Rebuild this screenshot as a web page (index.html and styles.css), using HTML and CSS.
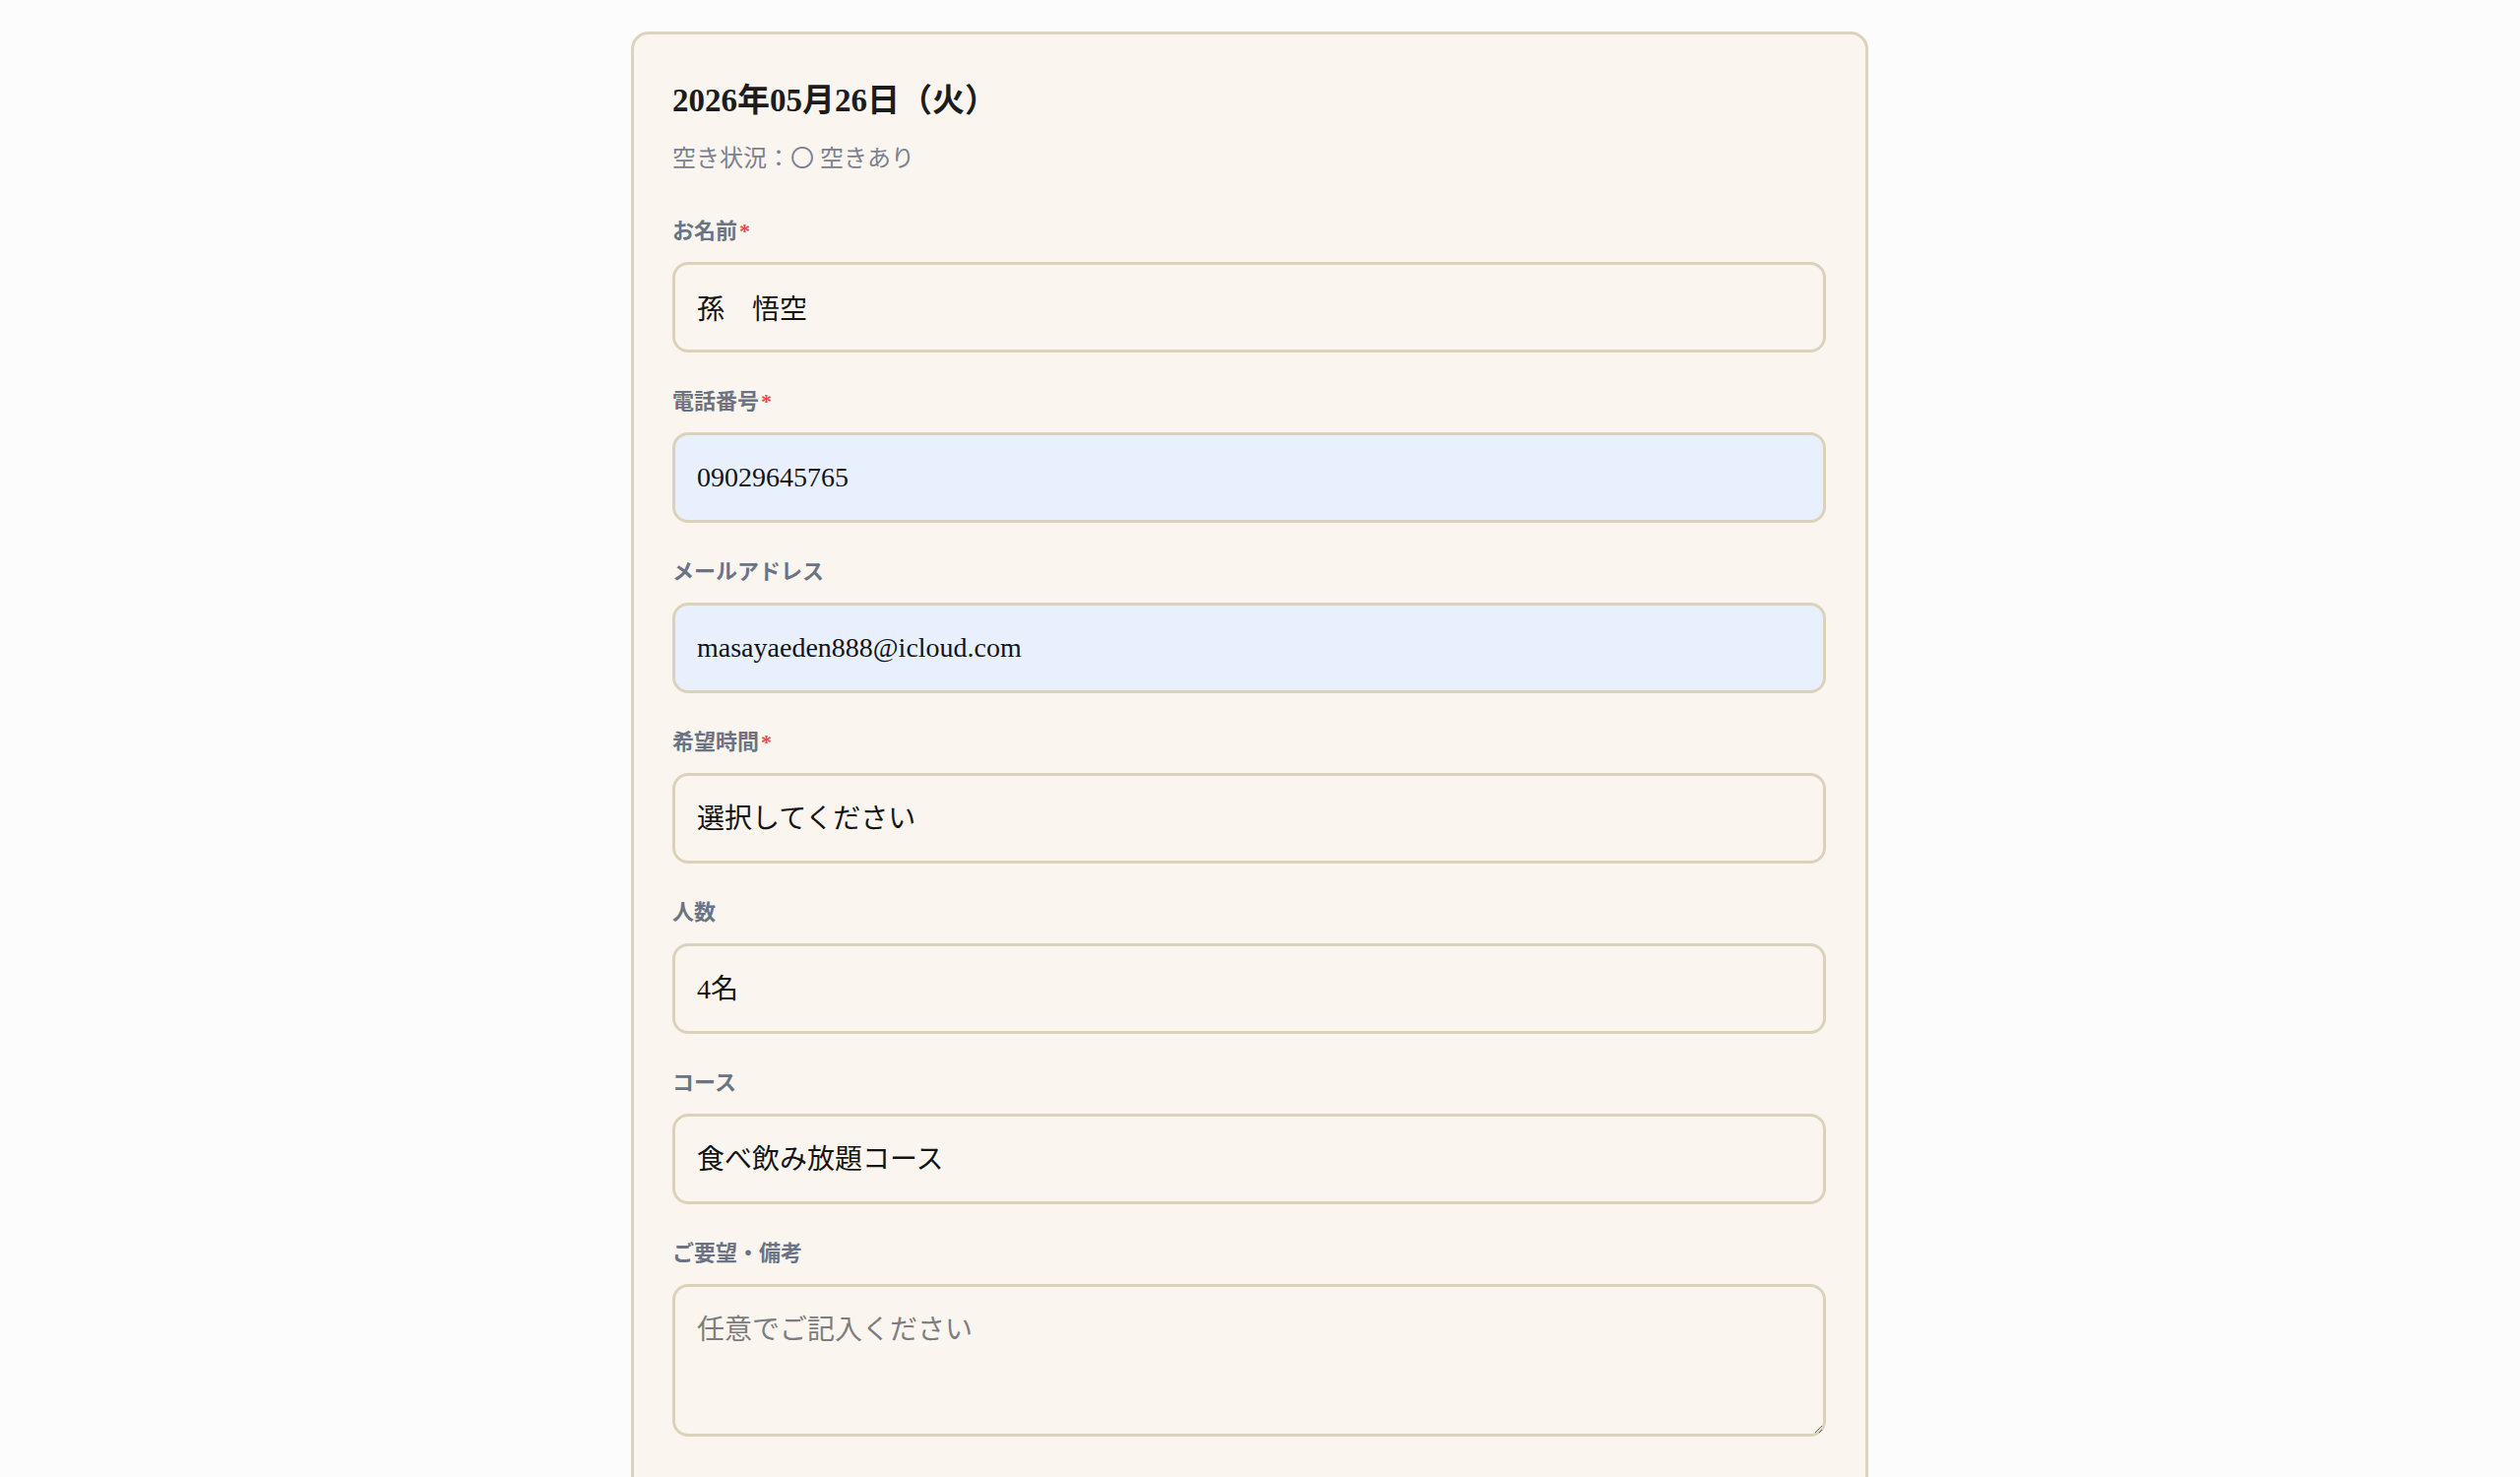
FILE: index.html
```html
<!DOCTYPE html>
<html lang="ja">
<head>
    <meta charset="UTF-8">
    <meta name="viewport" content="width=device-width, initial-scale=1.0">
    <title>ご予約フォーム</title>
    <link rel="stylesheet" href="styles.css">
</head>
<body>
    <div class="reserve-card">
        <!-- Header -->
        <h2 class="reserve-date">2026年05月26日（火）</h2>
        <p class="reserve-status">空き状況：〇 空きあり</p>

        <!-- Fields -->
        <div class="form-group">
            <label class="form-label" for="name">お名前<span class="required">*</span></label>
            <input class="form-input" id="name" type="text" value="孫　悟空">
        </div>

        <div class="form-group">
            <label class="form-label" for="tel">電話番号<span class="required">*</span></label>
            <input class="form-input autofilled" id="tel" type="tel" value="09029645765">
        </div>

        <div class="form-group">
            <label class="form-label" for="email">メールアドレス</label>
            <input class="form-input autofilled" id="email" type="email" value="masayaeden888@icloud.com">
        </div>

        <div class="form-group">
            <label class="form-label" for="time">希望時間<span class="required">*</span></label>
            <select class="form-input" id="time">
                <option>選択してください</option>
            </select>
        </div>

        <div class="form-group">
            <label class="form-label" for="people">人数</label>
            <select class="form-input" id="people">
                <option>4名</option>
            </select>
        </div>

        <div class="form-group">
            <label class="form-label" for="course">コース</label>
            <select class="form-input" id="course">
                <option>食べ飲み放題コース</option>
            </select>
        </div>

        <div class="form-group">
            <label class="form-label" for="note">ご要望・備考</label>
            <textarea class="form-input form-textarea" id="note" placeholder="任意でご記入ください"></textarea>
        </div>
    </div>
</body>
</html>
```

FILE: styles.css
```css
body {
    margin: 0;
    padding: 32px 21px 0 0;
    background-color: #fcfcfc;
    font-family: "Liberation Serif", "Noto Sans CJK JP", serif;
}

.reserve-card {
    width: 1257px;
    box-sizing: border-box;
    margin: 0 auto;
    padding: 47px 40px 40px 39px;
    background: #faf6ef;
    border: 3px solid #dcd3bd;
    border-radius: 18px;
}

.reserve-date {
    font-size: 33px;
    line-height: 40px;
    font-weight: 700;
    color: #1c1c1c;
    margin: 0 0 24px;
}

.reserve-status {
    font-size: 24px;
    line-height: 30px;
    color: #7b8190;
    margin: 0 0 45px;
}

.form-group {
    margin-bottom: 36px;
}

.form-label {
    display: block;
    font-size: 22px;
    line-height: 28px;
    font-weight: 600;
    color: #6b7384;
    margin-bottom: 17px;
}

.required {
    color: #e5484d;
    margin-left: 2px;
}

.form-input {
    display: block;
    width: 100%;
    height: 92px;
    box-sizing: border-box;
    padding: 0 22px;
    border: 3px solid #dbd2bb;
    border-radius: 16px;
    background: #faf6ef;
    font-family: inherit;
    font-size: 28px;
    color: #141414;
    outline: none;
    -webkit-appearance: none;
    appearance: none;
}

.autofilled {
    background: #e8f0fe;
}

.form-textarea {
    height: 155px;
    padding: 24px 22px;
    line-height: 40px;
    resize: vertical;
}

.form-textarea::placeholder {
    color: #7d7d7d;
}
```
